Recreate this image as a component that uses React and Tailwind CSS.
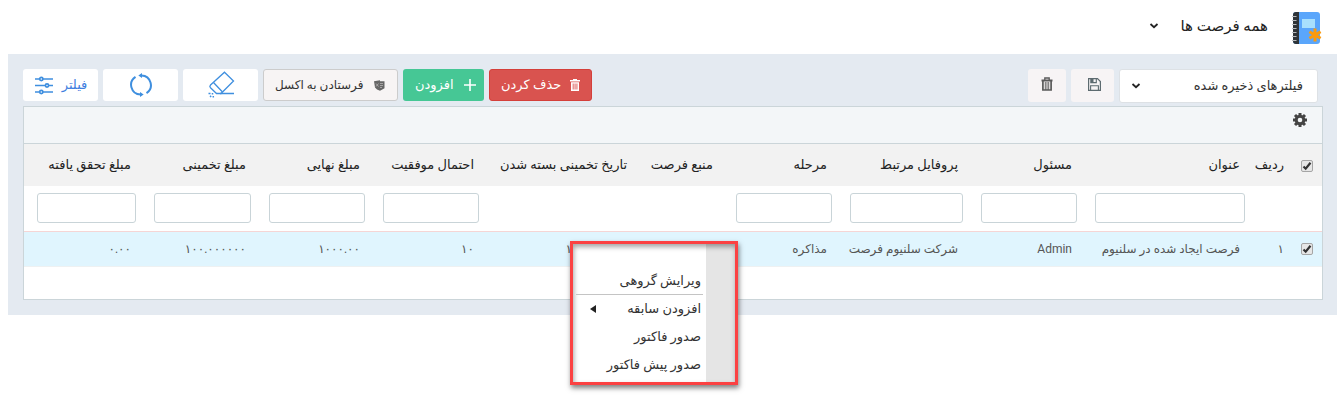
import React from "react";

const columns = [
  { label: "عنوان", width: "w-[168px]", value: "فرصت ایجاد شده در سلنیوم", filter: true },
  { label: "مسئول", width: "w-[114px]", value: "Admin", filter: true },
  { label: "پروفایل مرتبط", width: "w-[131px]", value: "شرکت سلنیوم فرصت", filter: true },
  { label: "مرحله", width: "w-[114px]", value: "مذاکره", filter: true },
  { label: "منبع فرصت", width: "w-[86px]", value: "", filter: false },
  { label: "تاریخ تخمینی بسته شدن", width: "w-[153px]", value: "۱۳۹۸/۰۵/۱۵", filter: false },
  { label: "احتمال موفقیت", width: "w-[114px]", value: "۱۰", filter: true },
  { label: "مبلغ نهایی", width: "w-[114px]", value: "۱۰۰۰.۰۰", filter: true },
  { label: "مبلغ تخمینی", width: "w-[115px]", value: "۱۰۰.۰۰۰۰۰۰", filter: true },
  { label: "مبلغ تحقق یافته", width: "w-[117px]", value: "۰.۰۰", filter: true },
];

function NotebookIcon() {
  return (
    <svg width="32" height="34" viewBox="0 0 32 34" aria-hidden="true">
      <rect x="1" y="1" width="27" height="32" rx="3" fill="#5aa6fb" />
      <path d="M4 1h3v32H4a3 3 0 0 1-3-3V4a3 3 0 0 1 3-3z" fill="#2f3438" />
      <path d="M0 5.500h4.500M0 9.500h4.500M0 13.500h4.500M0 17.500h4.500M0 21.500h4.500M0 25.500h4.500M0 29.500h4.500" stroke="#b9bcbf" strokeWidth="1.2" />
      <rect x="10" y="8" width="13" height="9" fill="#a8e0fd" />
      <path d="M23 17.500v13M17.400 20.700l11.200 6.600M17.400 27.300l11.200-6.600" stroke="#fb9a0c" strokeWidth="3" />
    </svg>
  );
}

function Chevron() {
  return (
    <svg width="10" height="8" viewBox="0 0 10 8" fill="none" stroke="#222" strokeWidth="1.8" aria-hidden="true">
      <path d="M1.5 2 5 5.2 8.500 2" />
    </svg>
  );
}

function SlidersIcon() {
  return (
    <svg width="20" height="20" viewBox="0 0 20 20" fill="none" stroke="#3f8fdf" strokeWidth="1.7" aria-hidden="true">
      <path d="M1 4h4.500M9 4h10M1 10.500h10M15 10.500h4M1 17h4.500M9 17h10" />
      <circle cx="7.300" cy="4" r="1.600" />
      <circle cx="13" cy="10.500" r="1.600" />
      <circle cx="7.300" cy="17" r="1.600" />
    </svg>
  );
}

function RefreshIcon() {
  return (
    <svg width="24" height="24" viewBox="0 0 24 24" fill="none" stroke="#3f8fdf" strokeWidth="2" aria-hidden="true">
      <path d="M6.500 3.800A9.700 9.700 0 0 0 11.500 21.600M17.500 20.200A9.700 9.700 0 0 0 12.500 2.400" />
      <path d="M13 0v5L9.300 2.400zM11 19v5l3.700-2.400z" fill="#3f8fdf" stroke="none" />
    </svg>
  );
}

function EraserIcon() {
  return (
    <svg width="28" height="28" viewBox="0 0 28 28" fill="none" stroke="#3f8fdf" strokeWidth="1.300" aria-hidden="true">
      <path d="M17.500 1.200 26.500 10 14 22.500H9.500L3.500 16.800Q2.200 15.500 3.500 14z" />
      <path d="M6.500 11.500 15.500 21M13 22.500h14" />
      <path d="M1.500 22.500h2M3 25.800l1.200-1M6.300 26.500v-1.500M5.500 22v1.500" strokeWidth="1.500" />
    </svg>
  );
}

function TrashIcon() {
  return (
    <svg width="10" height="12" viewBox="0 0 10 12" fill="currentColor" aria-hidden="true">
      <path d="M3 0h4v1h3v1.500H0V1h3z" />
      <path fillRule="evenodd" d="M1 3.200h8V12H1zM2.700 4.500v6h.9v-6zM4.600 4.500v6h.9v-6zM6.500 4.500v6h.9v-6z" />
    </svg>
  );
}

function TrashCanIcon() {
  return (
    <svg width="12" height="14" viewBox="0 0 12 14" fill="none" stroke="#5a5a5a" aria-hidden="true">
      <path d="M.5 3.500h11" strokeWidth="2" />
      <path d="M3.800 3V1h4.400v2" strokeWidth="1.300" />
      <path d="M1.900 4v9h8.200V4" strokeWidth="1.700" />
      <path d="M4.300 5v8M6 5v8M7.700 5v8" strokeWidth=".9" />
    </svg>
  );
}

function SaveIcon() {
  return (
    <svg width="13" height="13" viewBox="0 0 13 13" fill="none" stroke="#5d6b70" aria-hidden="true">
      <path d="M.6.6h8.900l2.900 2.900v8.900H.6z" strokeWidth="1.200" />
      <path d="M2.800.6v4h5.500v-4M2.600 12.400V7.800h7.800v4.600" strokeWidth="1.100" />
      <path d="M3 1h2.500v3.400H3z" fill="#5d6b70" stroke="none" />
    </svg>
  );
}

function ExcelIcon() {
  return (
    <svg width="11" height="11" viewBox="0 0 11 11" aria-hidden="true">
      <path d="M0 1.200 6 .3v.9h4.500v7L6 10.700 3 9.500 1 7.500z" fill="#666" />
      <path d="m2 3.500 2.500 3M4.500 3.500 2 6.500M6 3.500h3M6 5.500h3M6 7.500h2" stroke="#b5b2b2" strokeWidth=".8" />
    </svg>
  );
}

function GearIcon() {
  return (
    <svg width="14" height="14" viewBox="0 0 14 14" aria-hidden="true">
      <g stroke="#444" strokeWidth="3">
        <path d="M7 0v14M0 7h14M2 2l10 10M12 2 2 12" />
      </g>
      <circle cx="7" cy="7" r="5.300" fill="#444" />
      <circle cx="7" cy="7" r="2.300" fill="#f3f6f7" />
    </svg>
  );
}

function Tick({ label }) {
  return (
    <span className="relative inline-flex h-3 w-3 align-middle">
      <input
        type="checkbox"
        defaultChecked
        aria-label={label}
        className="peer h-3 w-3 appearance-none rounded-[2px] border border-[#a5a5a5] bg-[#e6e6e6]"
      />
      <svg
        className="pointer-events-none absolute inset-0 hidden peer-checked:block"
        width="12" height="12" viewBox="0 0 12 12" fill="none" stroke="#333" strokeWidth="2.200" aria-hidden="true"
      >
        <path d="m2.500 6.500 2.200 2.200 4.800-6" />
      </svg>
    </span>
  );
}

const toolButton = "flex h-8 w-[75px] items-center justify-center rounded-[3px] bg-white";

function ContextMenu() {
  return (
    <div
      role="menu"
      className="absolute left-[570px] top-[241px] flex h-[144px] w-[168px] border-3 border-[#fb4142] bg-white text-[13px] text-[#333] shadow-[1px_3px_5px_rgba(0,0,0,0.5),inset_1px_3px_5px_rgba(0,0,0,0.35)]"
    >
      <div className="w-[29px] shrink-0 bg-black/10" />
      <div className="flex grow flex-col px-[3px] pt-[23px]">
        <button type="button" role="menuitem" className="h-7 border-b border-[#c4c4c4] px-[2px] text-start">ویرایش گروهی</button>
        <button type="button" role="menuitem" className="flex h-7 items-center justify-between pe-[14px] ps-[2px]">
          افزودن سابقه
          <svg width="6" height="8" viewBox="0 0 6 8" fill="#222" aria-hidden="true"><path d="M6 0v8L0 4z" /></svg>
        </button>
        <button type="button" role="menuitem" className="h-7 px-[2px] text-start">صدور فاکتور</button>
        <button type="button" role="menuitem" className="h-7 px-[2px] text-start">صدور پیش فاکتور</button>
      </div>
    </div>
  );
}

export default function App() {
  return (
    <div dir="rtl" className="relative min-h-screen bg-white font-[Roboto,'DejaVu_Sans',sans-serif] text-[12px] text-[#333]">
      <header className="flex h-[54px] items-center ps-[13px] pt-[2px]">
        <NotebookIcon />
        <button type="button" className="ms-6 flex items-center gap-[22px] pb-1 text-[15px] text-[#222]">
          همه فرصت ها
          <Chevron />
        </button>
      </header>

      <main className="ml-2 bg-[#e4eaf1] pb-[15px] pl-[15px] pr-[14px] pt-[15px]">
        <div className="flex h-[37px] items-start justify-between">
          <div className="flex gap-[5px] ps-[5px]">
            <button type="button" className="flex h-[34px] w-[199px] items-center justify-between rounded-[3px] border border-[#dde1e5] bg-white pe-[11px] ps-[14px] text-[13px]">
              فیلترهای ذخیره شده
              <Chevron />
            </button>
            <button type="button" aria-label="ذخیره" className="flex h-[33px] w-[43px] items-center justify-center rounded-[3px] bg-[#f7f4f5] pb-[3px] pl-1"><SaveIcon /></button>
            <button type="button" aria-label="حذف فیلتر" className="flex h-[33px] w-[38px] items-center justify-center rounded-[3px] bg-[#f7f4f5] pb-[3px]"><TrashCanIcon /></button>
          </div>
          <div className="flex gap-[5px]">
            <button type="button" className="flex h-8 w-[103px] items-center justify-between rounded-[3px] border border-[#d43f3a] bg-[#d9534f] px-[11px] text-[13px] font-medium text-white">
              <TrashIcon />
              حذف کردن
            </button>
            <button type="button" className="flex h-8 w-[81px] items-center justify-between rounded-[3px] bg-[#46c795] pe-3 ps-2 text-[13px] font-medium text-white">
              <svg width="12" height="12" viewBox="0 0 12 12" stroke="white" strokeWidth="1.600" aria-hidden="true"><path d="M6 0v12M0 6h12" /></svg>
              افزودن
            </button>
            <button type="button" className="flex h-8 w-[135px] items-center justify-between rounded-[3px] border border-[#ccc] bg-[#f7f4f4] pe-[11px] ps-3">
              <ExcelIcon />
              فرستادن به اکسل
            </button>
            <button type="button" aria-label="پاک کردن" className={toolButton}><EraserIcon /></button>
            <button type="button" aria-label="بارگذاری دوباره" className={toolButton}><RefreshIcon /></button>
            <button type="button" className={toolButton + " gap-2 text-[13px] text-[#3f7fe0]"}>
              فیلتر
              <SlidersIcon />
            </button>
          </div>
        </div>

        <section className="border border-[#cbd5d9] bg-white pb-8">
          <div className="flex h-[37px] items-start border-b border-[#cbd5d9] bg-[#f3f6f8] ps-[15px] pt-[6px]">
            <button type="button" aria-label="تنظیمات"><GearIcon /></button>
          </div>
          <table className="w-full table-fixed whitespace-nowrap text-right">
            <thead>
              <tr className="h-[42px] bg-[#f2f2f2] text-[13px] text-[#222]">
                <th className="w-[30px] pr-[9px] font-normal"><Tick label="انتخاب همه" /></th>
                <th className="w-[42px] pr-2 font-normal">ردیف</th>
                {columns.map((c) => (
                  <th key={c.label} className={c.width + " pr-[10px] font-normal"}>{c.label}</th>
                ))}
              </tr>
              <tr className="h-[45px]">
                <td />
                <td />
                {columns.map((c) => (
                  <td key={c.label} className="pl-[13px] pr-[5px]">
                    {c.filter && (
                      <input type="text" aria-label={c.label} className="block h-[30px] w-full rounded-[3px] border border-[#c9d4d8] bg-white px-2" />
                    )}
                  </td>
                ))}
              </tr>
            </thead>
            <tbody>
              <tr className="h-[35px] border-y border-b-[#eef1f2] border-t-[#f5d5d5] bg-[#e0f5fe] text-[#555]">
                <td className="pr-[9px]"><Tick label="انتخاب ردیف ۱" /></td>
                <td className="pr-2">۱</td>
                {columns.map((c) => (
                  <td key={c.label} className="pr-[10px]">{c.value}</td>
                ))}
              </tr>
            </tbody>
          </table>
        </section>
      </main>
      <ContextMenu />
    </div>
  );
}
